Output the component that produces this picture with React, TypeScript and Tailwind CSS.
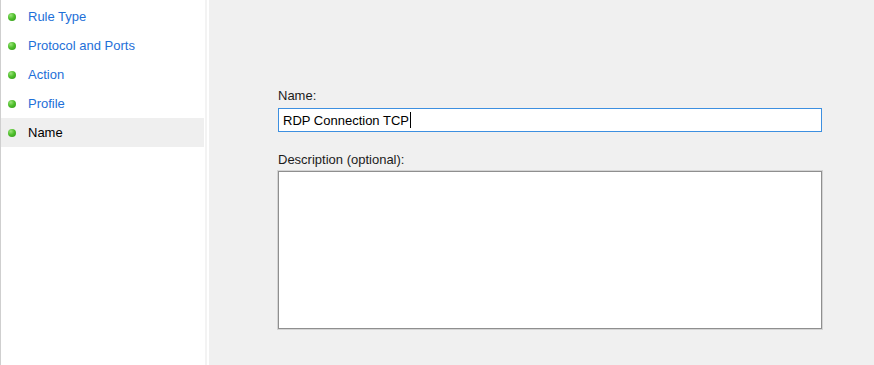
import * as React from "react"

const steps = [
  { label: "Rule Type", done: true },
  { label: "Protocol and Ports", done: true },
  { label: "Action", done: true },
  { label: "Profile", done: true },
  { label: "Name", current: true },
]

function Bullet() {
  return (
    <span
      className="block h-[8px] w-[8px] shrink-0 rounded-full"
      style={{
        background:
          "radial-gradient(circle at 35% 30%, #9be37a 0%, #4fbf2c 45%, #2f9418 100%)",
      }}
    />
  )
}

export default function App() {
  return (
    <div
      className="flex h-[365px] w-[874px] overflow-hidden bg-[#f0f0f0] text-[13px] text-black"
      style={{ fontFamily: '"Segoe UI", "Liberation Sans", Arial, sans-serif' }}
    >
      {/* step list */}
      <div className="flex w-[205px] shrink-0 flex-col border-l border-[#cfcfcf] bg-white pt-[2px]">
        {steps.map((s) => (
          <div
            key={s.label}
            className={
              "flex h-[29px] items-center pl-[7px] " +
              (s.current ? "mr-[1px] bg-[#efefef]" : "")
            }
          >
            <Bullet />
            <span
              className={
                "ml-[12px] leading-none " +
                (s.current ? "text-black" : "text-[#1e6fd8]")
              }
            >
              {s.label}
            </span>
          </div>
        ))}
      </div>
      {/* divider */}
      <div className="w-[2px] shrink-0 bg-[#f3f3f3]" />
      <div className="w-[2px] shrink-0 bg-white" />

      {/* form */}
      <div className="flex flex-1 flex-col pl-[69px] pt-[88px]">
        <label className="leading-[15px] text-[#1b1b1b]">Name:</label>
        <div className="mt-[5px] flex h-[24px] w-[544px] items-center border border-[#3d8fe0] bg-white pl-[4px]">
          <span className="leading-none">RDP Connection TCP</span>
          <span className="ml-[1px] h-[16px] w-[1px] bg-black" />
        </div>
        <label className="mt-[20px] leading-[15px] text-[#1b1b1b]">
          Description (optional):
        </label>
        <div className="mt-[4px] h-[158px] w-[544px] border border-[#8f8f8f] bg-white shadow-[0_0_0_1px_#d4d4d4]" />
      </div>
    </div>
  )
}
